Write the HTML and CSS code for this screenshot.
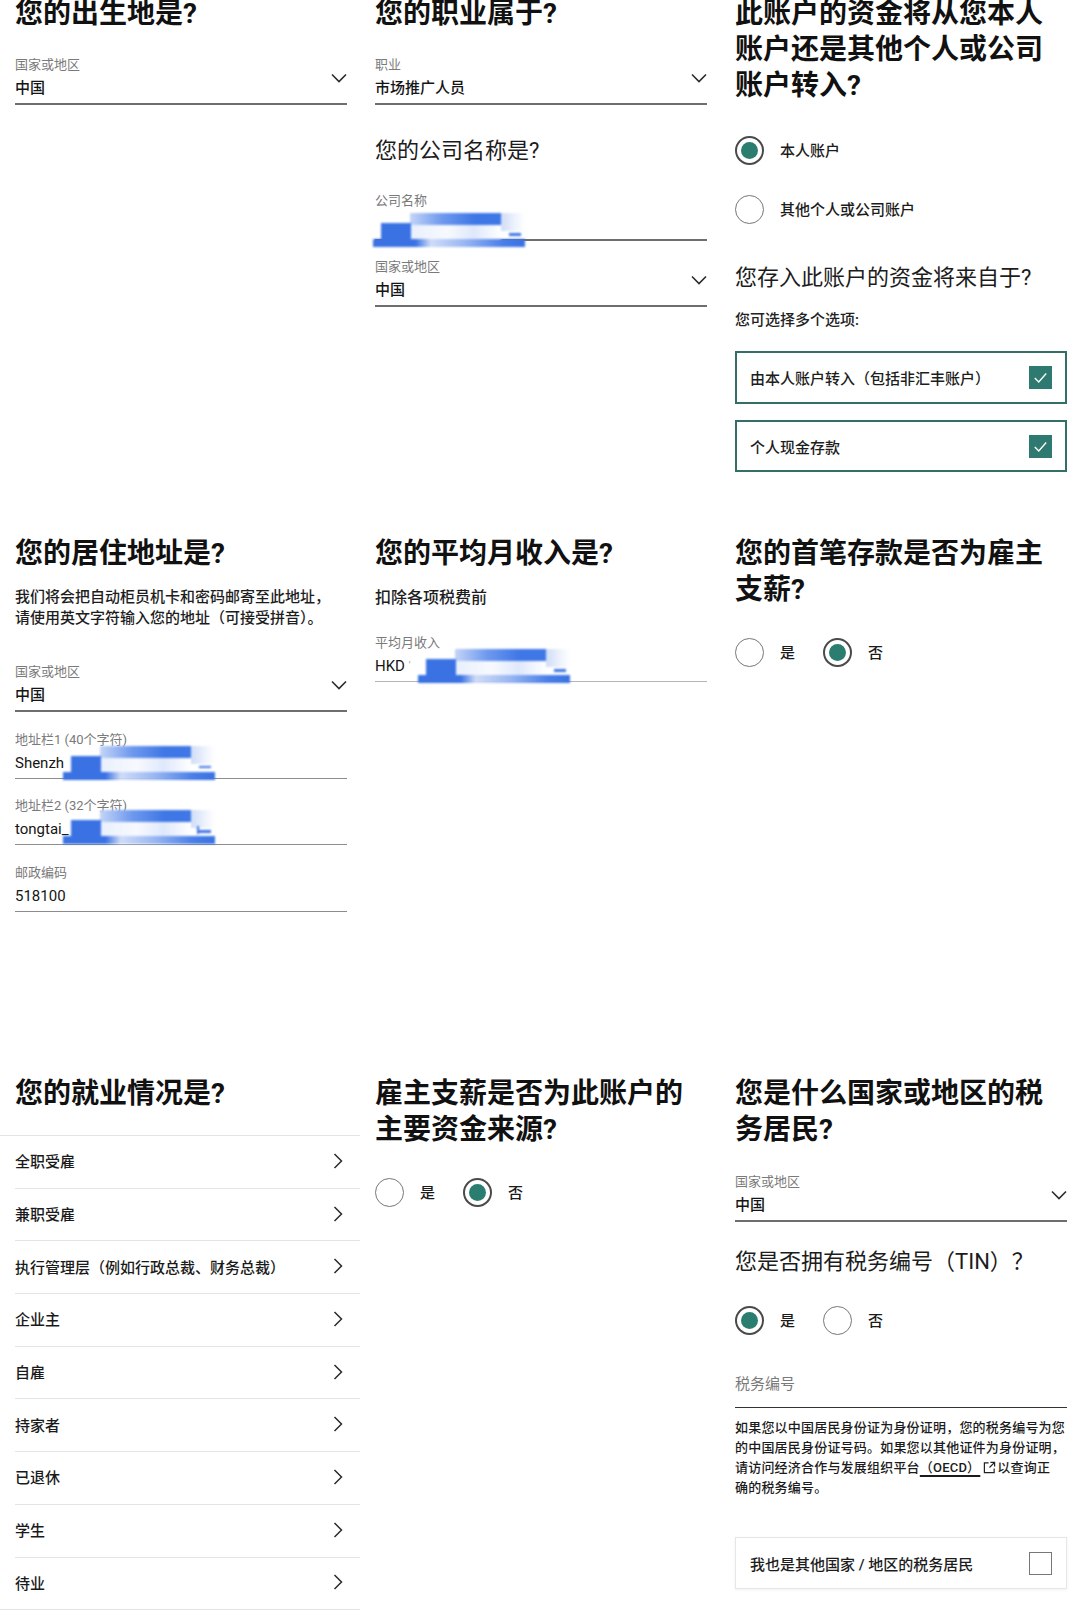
FILE: index.html
```html
<!DOCTYPE html>
<html lang="zh-CN">
<head>
<meta charset="utf-8">
<title>开户问卷</title>
<link rel="stylesheet" href="styles.css">
</head>
<body>
<main class="grid">

  <!-- Row 1 -->
  <section class="cell">
    <h2 class="title">您的出生地是?</h2>
    <div class="field select first">
      <div class="field-body">
        <div class="label">国家或地区</div>
        <div class="value">中国</div>
      </div>
      <svg class="chev-down" viewBox="0 0 16 10"><polyline points="1,1.5 8,8.5 15,1.5"/></svg>
    </div>
  </section>

  <section class="cell">
    <h2 class="title">您的职业属于?</h2>
    <div class="field select first">
      <div class="field-body">
        <div class="label">职业</div>
        <div class="value">市场推广人员</div>
      </div>
      <svg class="chev-down" viewBox="0 0 16 10"><polyline points="1,1.5 8,8.5 15,1.5"/></svg>
    </div>
    <h3 class="subtitle company-q">您的公司名称是?</h3>
    <div class="field company">
      <div class="field-body">
        <div class="label">公司名称</div>
        <div class="value">&nbsp;</div>
      </div>
      <div class="redact redact-company"><i class="a"></i><i class="d"></i><i class="b"></i><i class="c"></i><i class="f"></i><i class="e"></i></div>
    </div>
    <div class="field select company-country">
      <div class="field-body">
        <div class="label">国家或地区</div>
        <div class="value">中国</div>
      </div>
      <svg class="chev-down" viewBox="0 0 16 10"><polyline points="1,1.5 8,8.5 15,1.5"/></svg>
    </div>
  </section>

  <section class="cell">
    <h2 class="title">此账户的资金将从您本人账户还是其他个人或公司账户转入?</h2>
    <div class="radio-col">
      <div class="radio"><span class="dot on"></span><span class="radio-text">本人账户</span></div>
      <div class="radio"><span class="dot"></span><span class="radio-text">其他个人或公司账户</span></div>
    </div>
    <h3 class="subtitle source-q">您存入此账户的资金将来自于?</h3>
    <p class="hint">您可选择多个选项:</p>
    <div class="check-card checked">
      <span class="card-text">由本人账户转入（包括非汇丰账户）</span>
      <span class="box on"><svg viewBox="0 0 24 24"><polyline points="5.5,12.5 10,17 18.5,7.5"/></svg></span>
    </div>
    <div class="check-card checked second">
      <span class="card-text">个人现金存款</span>
      <span class="box on"><svg viewBox="0 0 24 24"><polyline points="5.5,12.5 10,17 18.5,7.5"/></svg></span>
    </div>
  </section>

  <!-- Row 2 -->
  <section class="cell">
    <h2 class="title">您的居住地址是?</h2>
    <p class="desc">我们将会把自动柜员机卡和密码邮寄至此地址，<br>请使用英文字符输入您的地址（可接受拼音）。</p>
    <div class="field select addr-country">
      <div class="field-body">
        <div class="label">国家或地区</div>
        <div class="value">中国</div>
      </div>
      <svg class="chev-down" viewBox="0 0 16 10"><polyline points="1,1.5 8,8.5 15,1.5"/></svg>
    </div>
    <div class="field light addr">
      <div class="field-body">
        <div class="label">地址栏1 (40个字符)</div>
        <div class="value latin">Shenzh</div>
      </div>
      <div class="redact redact-addr"><i class="a"></i><i class="d"></i><i class="b"></i><i class="c"></i><i class="f"></i><i class="e"></i></div>
    </div>
    <div class="field light addr">
      <div class="field-body">
        <div class="label">地址栏2 (32个字符)</div>
        <div class="value latin">tongtai_</div>
      </div>
      <div class="redact redact-addr2"><i class="a"></i><i class="d"></i><i class="b"></i><i class="c"></i><i class="f"></i><i class="g"></i><i class="e"></i></div>
    </div>
    <div class="field light addr">
      <div class="field-body">
        <div class="label">邮政编码</div>
        <div class="value latin">518100</div>
      </div>
    </div>
  </section>

  <section class="cell">
    <h2 class="title">您的平均月收入是?</h2>
    <p class="lead">扣除各项税费前</p>
    <div class="field light income">
      <div class="field-body">
        <div class="label">平均月收入</div>
        <div class="value latin">HKD <span class="tick">'</span></div>
      </div>
      <div class="redact redact-income"><i class="a"></i><i class="d"></i><i class="b"></i><i class="c"></i><i class="f"></i><i class="e"></i></div>
    </div>
  </section>

  <section class="cell">
    <h2 class="title">您的首笔存款是否为雇主支薪?</h2>
    <div class="radio-row">
      <div class="radio"><span class="dot"></span><span class="radio-text">是</span></div>
      <div class="radio"><span class="dot on"></span><span class="radio-text">否</span></div>
    </div>
  </section>

  <!-- Row 3 -->
  <section class="cell">
    <h2 class="title">您的就业情况是?</h2>
    <ul class="list">
      <li><span>全职受雇</span><svg class="chev-right" viewBox="0 0 10 16"><polyline points="1.5,1 8.5,8 1.5,15"/></svg></li>
      <li><span>兼职受雇</span><svg class="chev-right" viewBox="0 0 10 16"><polyline points="1.5,1 8.5,8 1.5,15"/></svg></li>
      <li><span>执行管理层（例如行政总裁、财务总裁）</span><svg class="chev-right" viewBox="0 0 10 16"><polyline points="1.5,1 8.5,8 1.5,15"/></svg></li>
      <li><span>企业主</span><svg class="chev-right" viewBox="0 0 10 16"><polyline points="1.5,1 8.5,8 1.5,15"/></svg></li>
      <li><span>自雇</span><svg class="chev-right" viewBox="0 0 10 16"><polyline points="1.5,1 8.5,8 1.5,15"/></svg></li>
      <li><span>持家者</span><svg class="chev-right" viewBox="0 0 10 16"><polyline points="1.5,1 8.5,8 1.5,15"/></svg></li>
      <li><span>已退休</span><svg class="chev-right" viewBox="0 0 10 16"><polyline points="1.5,1 8.5,8 1.5,15"/></svg></li>
      <li><span>学生</span><svg class="chev-right" viewBox="0 0 10 16"><polyline points="1.5,1 8.5,8 1.5,15"/></svg></li>
      <li><span>待业</span><svg class="chev-right" viewBox="0 0 10 16"><polyline points="1.5,1 8.5,8 1.5,15"/></svg></li>
    </ul>
  </section>

  <section class="cell">
    <h2 class="title">雇主支薪是否为此账户的主要资金来源?</h2>
    <div class="radio-row">
      <div class="radio"><span class="dot"></span><span class="radio-text">是</span></div>
      <div class="radio"><span class="dot on"></span><span class="radio-text">否</span></div>
    </div>
  </section>

  <section class="cell">
    <h2 class="title">您是什么国家或地区的税务居民?</h2>
    <div class="field select tax-country">
      <div class="field-body">
        <div class="label">国家或地区</div>
        <div class="value">中国</div>
      </div>
      <svg class="chev-down" viewBox="0 0 16 10"><polyline points="1,1.5 8,8.5 15,1.5"/></svg>
    </div>
    <h3 class="subtitle tin-q">您是否拥有税务编号（<span class="latin">TIN</span>）？</h3>
    <div class="radio-row tin-radios">
      <div class="radio"><span class="dot on"></span><span class="radio-text">是</span></div>
      <div class="radio"><span class="dot"></span><span class="radio-text">否</span></div>
    </div>
    <div class="tin-input">税务编号</div>
    <p class="note">如果您以中国居民身份证为身份证明，您的税务编号为您<br>的中国居民身份证号码。如果您以其他证件为身份证明，<br>请访问经济合作与发展组织平台<a class="link">（OECD）</a><svg class="ext" viewBox="0 0 14 14"><path d="M6 2H1.5v10.5H12V8"/><path d="M8 1.5h4.5V6M12.5 1.5L7 7"/></svg>以查询正<br>确的税务编号。</p>
    <div class="check-card plain">
      <span class="card-text">我也是其他国家 / 地区的税务居民</span>
      <span class="box"></span>
    </div>
  </section>

</main>
</body>
</html>
```

FILE: styles.css
```css
* { box-sizing: border-box; }

html, body {
  margin: 0;
  padding: 0;
  background: #ffffff;
}

body {
  width: 1080px;
  height: 1620px;
  overflow: hidden;
  font-family: Roboto, "Noto Sans CJK SC", sans-serif;
  color: #161616;
}

.grid {
  display: grid;
  grid-template-columns: 360px 360px 360px;
  grid-template-rows: 540px 540px 540px;
  margin-top: -4px;
}

.cell {
  padding: 0 13px 0 15px;
  position: relative;
}

.title {
  margin: 0;
  font-size: 28px;
  line-height: 36px;
  font-weight: 700;
  color: #111;
}

.subtitle {
  margin: 0;
  font-size: 22px;
  line-height: 30px;
  font-weight: 400;
  color: #1c1c1c;
}

/* ---------- fields ---------- */
.field {
  display: flex;
  align-items: center;
  position: relative;
  border-bottom: 2px solid #6e6e6e;
  padding-bottom: 4px;
}
.field.light { border-bottom: 1.5px solid #8d8d8d; }
.field-body { flex: 1; }

.label {
  font-size: 13px;
  line-height: 18px;
  color: #7a7a7a;
}
.value {
  margin-top: 3px;
  font-size: 15px;
  line-height: 22px;
  font-weight: 500;
  color: #151515;
}
.value.latin { font-weight: 400; }
.tick { color: #999; font-size: 10px; vertical-align: top; }

.chev-down {
  width: 16px;
  height: 10px;
  fill: none;
  stroke: #2b2b2b;
  stroke-width: 1.6;
  flex: none;
}

.field.first { margin-top: 24px; }
.company-q { margin-top: 31px; }
.field.company { margin-top: 26px; }
.field.company-country { margin-top: 17px; }

.desc {
  margin: 15px 0 0 0;
  font-size: 15px;
  line-height: 21px;
  font-weight: 500;
  color: #1d1d1d;
}
.field.addr-country { margin-top: 34px; }
.field.addr { margin-top: 18.5px; }

.lead {
  margin: 15px 0 0 0;
  font-size: 16px;
  line-height: 22px;
  font-weight: 500;
  color: #1d1d1d;
}
.field.income { margin-top: 25px; border-bottom-color: #b5b5b5; }

.field.tax-country { margin-top: 25px; }
.tin-q { margin-top: 25px; }

/* ---------- redaction blobs ---------- */
.redact {
  position: absolute;
  width: 152px;
  height: 35px;
  filter: blur(1.3px);
}
.redact i { position: absolute; display: block; }
.redact .a { left: 37px; top: 0; width: 93px; height: 12px;
  background: linear-gradient(90deg, #c3d5f7 0%, #6d98ee 35%, #3f77e6 70%, #3f77e6 100%); }
.redact .d { left: 128px; top: 0; width: 24px; height: 18px;
  background: linear-gradient(90deg, #cfddf8 0%, #eef3fd 60%, rgba(255,255,255,0) 100%); }
.redact .b { left: 8px; top: 10px; width: 30px; height: 22px; background: #3a72e4; }
.redact .c { left: 38px; top: 12px; width: 90px; height: 15px;
  background: linear-gradient(90deg, #e9f0fd 0%, #f7f9fe 40%, #dfe8fb 70%, #ffffff 100%); }
.redact .f { left: 136px; top: 20px; width: 12px; height: 2.5px; background: #3d74e4; }
.redact .g { left: 134px; top: 16px; width: 2px; height: 8px; background: #3d74e4; }
.redact .e { left: 0; top: 26px; width: 152px; height: 8px;
  background: linear-gradient(90deg, #3a72e4 0%, #3a72e4 28%, #cfdcf8 38%, #9ab7f2 60%, #4a7fe8 85%, #3a72e4 100%); }

.redact-company { left: -2px; top: 21px; }
.redact-addr { left: 48px; top: 15px; }
.redact-addr2 { left: 48px; top: 13px; }
.redact-income { left: 43px; top: 15px; }

/* ---------- radios ---------- */
.radio {
  display: flex;
  align-items: center;
  gap: 16px;
}
.dot {
  width: 29px;
  height: 29px;
  border-radius: 50%;
  border: 1.5px solid #777;
  flex: none;
  position: relative;
  background: #fff;
}
.dot.on {
  border: 2px solid #4a4a4a;
}
.dot.on::after {
  content: "";
  position: absolute;
  left: 4px;
  top: 4px;
  width: 17px;
  height: 17px;
  border-radius: 50%;
  background: #2b7e6f;
}
.radio-text {
  font-size: 15px;
  line-height: 22px;
  font-weight: 500;
  color: #1b1b1b;
}

.radio-col {
  display: flex;
  flex-direction: column;
  gap: 30px;
  margin-top: 32px;
}
.radio-row {
  display: flex;
  gap: 28px;
  margin-top: 30px;
}
.radio-row.tin-radios { margin-top: 29px; }

.source-q { margin-top: 39px; }
.hint {
  margin: 17px 0 0 0;
  font-size: 15px;
  line-height: 20px;
  font-weight: 500;
  color: #222;
}

/* ---------- checkbox cards ---------- */
.check-card {
  display: flex;
  align-items: center;
  justify-content: space-between;
  height: 53px;
  padding: 0 13px 0 13px;
  margin-top: 21px;
}
.check-card.checked { border: 2px solid #336f66; }
.check-card.second { margin-top: 16px; height: 52px; }
.check-card.plain {
  border: 1px solid #e6e6e6;
  box-shadow: 0 1px 3px rgba(0,0,0,0.06);
  height: 52px;
  margin-top: 39px;
  padding: 0 14px 0 14px;
}
.card-text {
  font-size: 15px;
  font-weight: 500;
  color: #1d1d1d;
}
.box {
  width: 23px;
  height: 23px;
  border: 1.5px solid #777;
  flex: none;
  display: flex;
  align-items: center;
  justify-content: center;
}
.box.on {
  background: #2f7a70;
  border-color: #2f7a70;
}
.box svg {
  width: 21px;
  height: 21px;
  fill: none;
  stroke: #ffffff;
  stroke-width: 1.6;
}

/* ---------- list ---------- */
.list {
  list-style: none;
  margin: 23px -13px 0 -15px;
  padding: 0;
  border-top: 1.5px solid #e4e4e4;
}
.list li {
  height: 52.7px;
  margin-left: 15px;
  padding-right: 17px;
  padding-bottom: 2px;
  border-bottom: 1.5px solid #e4e4e4;
  display: flex;
  align-items: center;
  justify-content: space-between;
  font-size: 15px;
  font-weight: 500;
  color: #1a1a1a;
}
.list li:last-child { margin-left: 0; padding-left: 15px; }
.chev-right {
  width: 10px;
  height: 16px;
  fill: none;
  stroke: #2b2b2b;
  stroke-width: 1.5;
}

/* ---------- TIN ---------- */
.tin-input {
  margin-top: 38px;
  font-size: 15px;
  line-height: 22px;
  color: #7a7a7a;
  padding-bottom: 12px;
  border-bottom: 1.5px solid #333;
}
.note {
  margin: 10px 0 0 0;
  font-size: 13px;
  letter-spacing: 0.2px;
  line-height: 20px;
  font-weight: 500;
  color: #1b1b1b;
}
.link {
  color: #1b1b1b;
  text-decoration: underline;
  text-decoration-thickness: 1.5px;
  text-underline-offset: 3px;
}
.ext {
  width: 13px;
  height: 13px;
  margin: 0 1px 0 3px;
  vertical-align: -2px;
  fill: none;
  stroke: #222;
  stroke-width: 1.3;
}
```
